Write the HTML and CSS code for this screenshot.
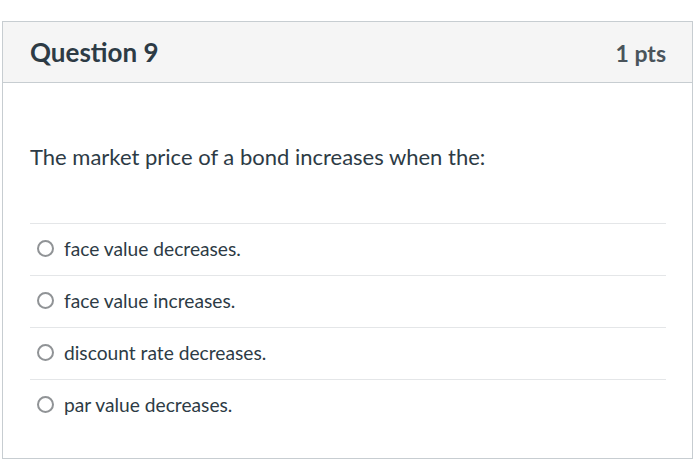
FILE: index.html
```html
<!DOCTYPE html>
<html>
<head>
<meta charset="utf-8">
<link rel="stylesheet" href="styles.css">
</head>
<body>
<div class="question">
  <div class="header">
    <div class="title">Question 9</div>
    <div class="pts">1 pts</div>
  </div>
  <div class="content">
    <div class="prompt">The market price of a bond increases when the:</div>
    <div class="answers">
      <div class="answer"><span class="radio"></span><span class="label">face value decreases.</span></div>
      <div class="answer"><span class="radio"></span><span class="label">face value increases.</span></div>
      <div class="answer"><span class="radio"></span><span class="label">discount rate decreases.</span></div>
      <div class="answer"><span class="radio"></span><span class="label">par value decreases.</span></div>
    </div>
  </div>
</div>
</body>
</html>
```
FILE: styles.css
```css
html, body {
  margin: 0;
  padding: 0;
  background: #ffffff;
}
body {
  font-family: Lato, "Noto Sans", sans-serif;
  color: #2d3b45;
  padding: 21px 0 0 2px;
}
.question {
  width: 691px;
  height: 438px;
  box-sizing: border-box;
  border: 1px solid #c7cdd1;
}
.header {
  height: 61px;
  box-sizing: border-box;
  background: #f5f5f5;
  border-bottom: 1px solid #c7cdd1;
  display: flex;
  align-items: center;
  justify-content: space-between;
  padding: 0 26px 0 27px;
}
.title {
  font-size: 26px;
  font-weight: 700;
}
.pts {
  font-size: 23px;
  font-weight: 700;
  color: #4a545b;
  padding-top: 2px;
}
.content {
  padding: 0 26px 0 27px;
}
.prompt {
  box-sizing: border-box;
  height: 140px;
  padding-top: 60px;
  font-size: 22px;
  line-height: 28px;
}
.answers {
  border-top: 1px solid #e4e6e8;
}
.answer {
  height: 52px;
  box-sizing: border-box;
  display: flex;
  align-items: center;
  padding-left: 7px;
  padding-bottom: 3px;
  border-bottom: 1px solid #e4e6e8;
}
.answer:last-child {
  border-bottom: none;
}
.radio {
  width: 17px;
  height: 17px;
  box-sizing: border-box;
  border: 2px solid #909396;
  border-radius: 50%;
  margin-right: 10px;
  flex: none;
}
.label {
  font-size: 19.2px;
}
```
